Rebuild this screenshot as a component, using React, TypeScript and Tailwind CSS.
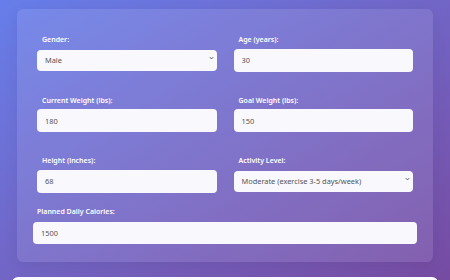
// App.tsx
const labelCls = "block text-[7px] leading-[9px] font-semibold text-white pl-[5px] mb-[1px]";
const inputCls =
  "w-full h-[23px] rounded-[4px] bg-[#f9f8fd] px-[8px] text-[7.4px] text-[#555] outline-none";

function Chevron() {
  return (
    <svg className="absolute right-[3px] top-1/2 -translate-y-1/2" width="5" height="4" viewBox="0 0 5 4">
      <path d="M0.8 1.2 L2.5 2.9 L4.2 1.2" fill="none" stroke="#444" strokeWidth="0.9" />
    </svg>
  );
}

function Field({ label, value }: { label: string; value: string }) {
  return (
    <div>
      <label className={labelCls}>{label}</label>
      <input className={inputCls} defaultValue={value} />
    </div>
  );
}

function SelectField({ label, value }: { label: string; value: string }) {
  return (
    <div>
      <label className={labelCls}>{label}</label>
      <div className="relative">
        <select className={inputCls + " appearance-none !h-[21px]"} defaultValue={value}>
          <option>{value}</option>
        </select>
        <Chevron />
      </div>
    </div>
  );
}

export default function App() {
  return (
    <div
      className="w-[450px] h-[280px] overflow-hidden bg-gradient-to-br from-[#667eea] to-[#764ba2] pt-[9px]"
      style={{ fontFamily: '"Noto Sans", "Open Sans", sans-serif' }}
    >
      <div className="mx-[17px] rounded-[6px] bg-white/10 px-[16px] pt-[26px] pb-[18px] shadow-[0_4px_16px_rgba(0,0,0,0.06)]">
        <div className="grid grid-cols-2 gap-x-[17px] gap-y-[24px] px-[4px]">
          <SelectField label="Gender:" value="Male" />
          <Field label="Age (years):" value="30" />
          <Field label="Current Weight (lbs):" value="180" />
          <Field label="Goal Weight (lbs):" value="150" />
          <Field label="Height (inches):" value="68" />
          <SelectField label="Activity Level:" value="Moderate (exercise 3-5 days/week)" />
        </div>
        <div className="mt-[14px]">
          <label className="block text-[7px] leading-[9px] font-semibold text-white pl-[4px] mb-[2px]">
            Planned Daily Calories:
          </label>
          <input className="w-full h-[22px] rounded-[4px] bg-[#f9f8fd] px-[8px] text-[7.4px] text-[#555] outline-none" defaultValue="1500" />
        </div>
      </div>
      <div className="mx-[12px] mt-[15px] h-[40px] rounded-[6px] bg-[#fbfaff]" />
    </div>
  );
}
